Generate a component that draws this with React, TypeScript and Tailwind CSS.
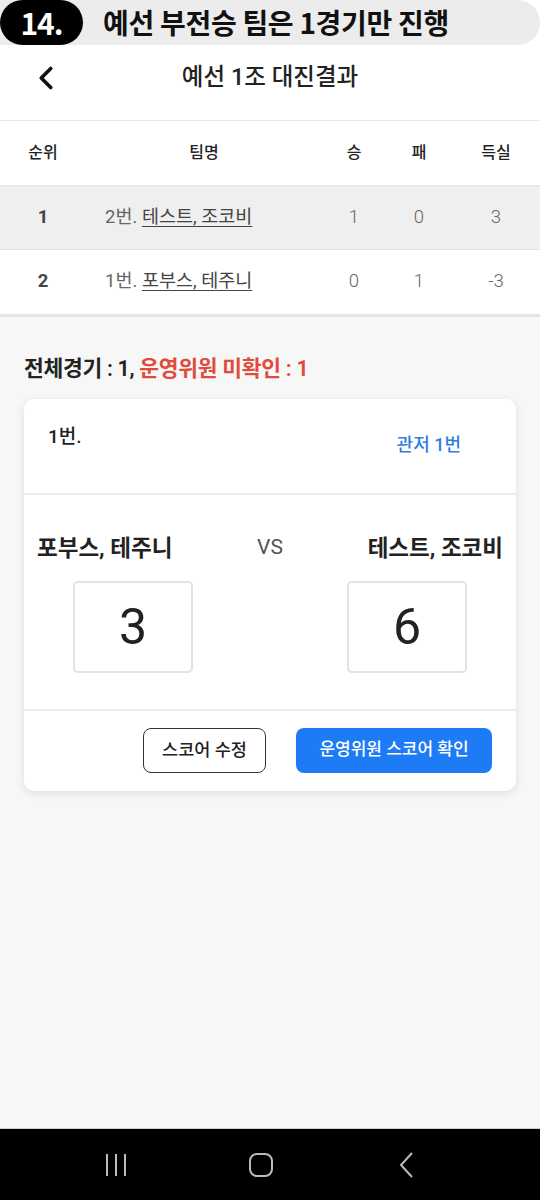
import { ChevronLeft } from 'lucide-react';

const font = { fontFamily: 'Roboto, "Noto Sans CJK KR", "Noto Sans", sans-serif' };
const cjk = { fontFamily: '"Noto Sans CJK KR", "Noto Sans", sans-serif' };

const rows = [
  { rank: 1, no: '2번.', name: '테스트, 조코비', win: 1, lose: 0, diff: '3', hl: true },
  { rank: 2, no: '1번.', name: '포부스, 테주니', win: 0, lose: 1, diff: '-3', hl: false },
];

export default function App() {
  return (
    <div className="w-[540px] min-h-[1200px] flex flex-col bg-[#f7f7f7]" style={font}>
      {/* 상단 안내 배너 */}
      <div className="bg-white h-[45px] flex" style={cjk}>
        <div className="flex-1 flex items-center bg-[#ececec] rounded-r-full">
          <div className="h-[45px] w-[83px] bg-black rounded-full flex items-center justify-center text-white text-[30px] font-bold leading-none pb-[2px] tracking-[-1px]">
            14.
          </div>
          <div className="ml-[20px] text-[28px] font-bold leading-none text-[#111] pb-[2px] tracking-[-0.3px]">
            예선 부전승 팀은 1경기만 진행
          </div>
        </div>
      </div>

      {/* 헤더 */}
      <div className="bg-white h-[76px] relative flex items-center justify-center border-b border-[#e8e8e8] pb-[10px]">
        <ChevronLeft className="absolute left-[27px] top-[14px] w-[38px] h-[38px] text-[#111]" strokeWidth={2.3} />
        <div className="text-[23.5px] font-medium text-[#222]">예선 1조 대진결과</div>
      </div>

      {/* 순위표 */}
      <div className="bg-white border-b-[3px] border-[#e4e4e4]">
        <div className="grid grid-cols-[86px_236px_64px_66px_88px] h-[65px] items-center text-[16px] font-medium text-[#222] text-center border-b border-[#e4e4e4]">
          <div>순위</div>
          <div>팀명</div>
          <div>승</div>
          <div>패</div>
          <div>득실</div>
        </div>
        {rows.map(r => (
          <div
            key={r.rank}
            className={`grid grid-cols-[86px_236px_64px_66px_88px] h-[64px] items-center text-[18.5px] text-center ${r.hl ? 'bg-[#efefef] border-b border-[#e2e2e2]' : 'bg-white'}`}
          >
            <div className="font-bold text-[#444]">{r.rank}</div>
            <div className="text-left pl-[19px] text-[#666]">
              {r.no} <span className="underline underline-offset-[3px] text-[#444]">{r.name}</span>
            </div>
            <div className="text-[#666] font-light">{r.win}</div>
            <div className="text-[#666] font-light">{r.lose}</div>
            <div className="text-[#666] font-light">{r.diff}</div>
          </div>
        ))}
      </div>

      {/* 경기 목록 */}
      <div className="flex-1 px-[24px] pt-[41px]">
        <div className="text-[21.5px] font-semibold text-[#222] leading-none tracking-[-0.3px]">
          전체경기 : 1, <span className="text-[#e24a3e]">운영위원 미확인 : 1</span>
        </div>

        <div className="mt-[19px] bg-white rounded-[10px] shadow-[0_2px_8px_rgba(0,0,0,0.10)]">
          <div className="h-[96px] flex justify-between border-b-2 border-[#ebebeb]">
            <div className="pl-[24px] pt-[28px] text-[19px] font-medium text-[#222] leading-none">1번.</div>
            <div className="pr-[55px] pt-[37px] text-[18px] font-medium text-[#2f7de1] leading-none">관저 1번</div>
          </div>

          <div className="h-[216px] border-b-2 border-[#ebebeb] px-[13px] pt-[42px]">
            <div className="flex justify-between items-center text-[22.5px] font-bold text-[#222] leading-none">
              <span>포부스, 테주니</span>
              <span className="text-[21px] font-normal text-[#555]">VS</span>
              <span>테스트, 조코비</span>
            </div>
            <div className="flex justify-between mt-[22px] px-[36px]">
              <ScoreBox value={3} />
              <ScoreBox value={6} />
            </div>
          </div>

          <div className="h-[80px] flex justify-end items-center gap-[30px] pr-[24px] pb-[1px]">
            <button className="w-[123px] h-[45px] rounded-[8px] border-[1.5px] border-[#333] text-[17.5px] font-medium text-[#222]">
              스코어 수정
            </button>
            <button className="w-[196px] h-[45px] rounded-[8px] bg-[#1d7bf5] text-[17px] font-medium text-white">
              운영위원 스코어 확인
            </button>
          </div>
        </div>
      </div>

      {/* 하단 내비게이션 */}
      <div className="h-[72px] bg-black border-t border-[#cfcfcf] flex items-center pl-[105px]">
        <svg width="22" height="26" viewBox="0 0 22 26" fill="none" stroke="#bbb" strokeWidth="2">
          <line x1="2" y1="2" x2="2" y2="24" />
          <line x1="11" y1="2" x2="11" y2="24" />
          <line x1="20" y1="2" x2="20" y2="24" />
        </svg>
        <svg className="ml-[121px]" width="26" height="26" viewBox="0 0 26 26" fill="none" stroke="#bbb" strokeWidth="2">
          <rect x="2" y="2" width="22" height="22" rx="7" />
        </svg>
        <svg className="ml-[124px]" width="18" height="28" viewBox="0 0 18 28" fill="none" stroke="#bbb" strokeWidth="2">
          <polyline points="14,2 3,14 14,26" />
        </svg>
      </div>
    </div>
  );
}

function ScoreBox({ value }: { value: number }) {
  return (
    <div className="w-[120px] h-[92px] border-2 border-[#e2e2e2] rounded-[5px] flex items-center justify-center">
      <span className="text-[50px] text-[#222] leading-none">{value}</span>
    </div>
  );
}
